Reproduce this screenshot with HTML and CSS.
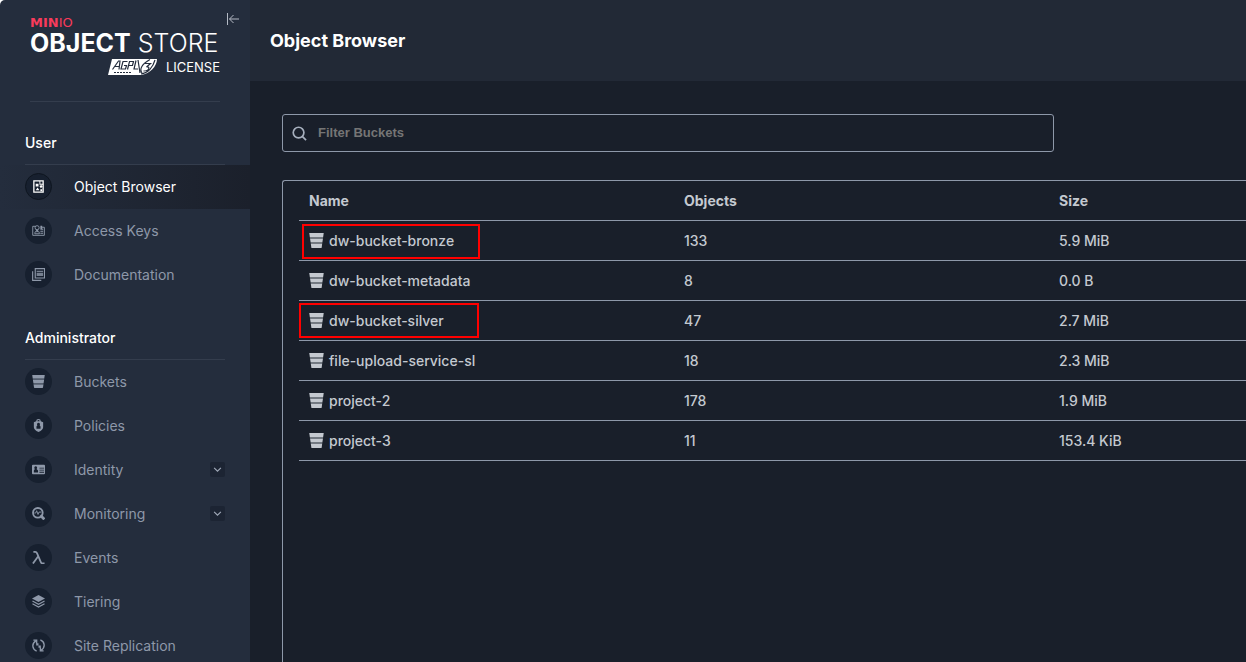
FILE: index.html
```html
<!DOCTYPE html>
<html lang="en">
<head>
<meta charset="utf-8">
<title>Object Browser</title>
<link rel="stylesheet" href="styles.css">
</head>
<body>
<svg class="defs" aria-hidden="true">
  <symbol id="bucket" viewBox="1 1 14 14.5">
    <path d="M1 1h14l-.6 4H1.600z"/><path d="M1.600 5h12.800l-.2 1.500H1.800z" opacity=".5"/>
    <path d="M1.800 6.500h12.400l-.5 3.500H2.300z"/><path d="M2.300 10h11.400l-.2 1.500h-11z" opacity=".5"/>
    <path d="M2.500 11.500h11L13 15q-.1.500-.6.500H3.600Q3.100 15.500 3 15z"/>
  </symbol>
</svg>
<div class="app">
  <aside class="sidebar">
    <header class="brand">
      <div class="logo">
        <div class="logo-small"><b>MIN</b>IO</div>
        <div class="logo-name"><b>OBJECT</b> STORE</div>
        <div class="logo-license">
          <svg class="agpl" viewBox="0 0 50 18" role="img" aria-label="AGPL v3 Free Software">
            <path d="M4 1h45c0 7-7 15-16 16H0z" fill="#fff"/>
            <g fill="none" stroke="#242d3d" stroke-width="1.200">
              <path d="M4.500 11.500l6-8.500h1.500l-1 8.500M7 8.500h4.500M19.500 3.500h-4.500l-2 7.500h4.500l1-3.500h-2.500M19.500 11.500l2-8h4l-1 4h-4M28 2.500l-2 8.500h4"/>
              <path d="M30 2l2 13M34 15c-3-4 0-9 8-13.500M33 16c7-1 12-7 14-14M37 5.500h5.500l-4 3.500c4-1 3 4-3 4" />
              <path d="M6 14.500h17" stroke-dasharray="2 1" stroke-width="1"/>
            </g>
          </svg>
          <span>LICENSE</span>
        </div>
      </div>
      <button class="collapse" type="button" aria-label="Collapse menu">
        <svg viewBox="0 0 14 14"><path d="M1.500 1v12M13 7H3.500M7.500 3l-4 4 4 4"/></svg>
      </button>
    </header>
    <nav>
      <h2>User</h2>
      <ul>
        <li><a class="item active" href="#browser"><span class="disc"><svg viewBox="0 0 14 14"><path d="M2 1h10v12H2z" fill="none" stroke="currentColor" stroke-width="1.400"/><path d="M4 4h3v3H4zM8 1h1v3h3v1H8zM8 6.500l2-1 1.500 1.500L9.500 9zM4 11l2-3 2 3zM9 10h2v2H9z"/></svg></span><span>Object Browser</span></a></li>
        <li><a class="item" href="#keys"><span class="disc"><svg viewBox="0 0 14 14"><g fill="none" stroke="currentColor"><path d="M4 2.500H.8v9.700h12.500V3.500H10"/><circle cx="5.500" cy="4" r="2.200"/><path d="M3 10.500c0-4.500 5-4.500 5 0zM4.500 6l2 3M6.500 6l-2 3"/></g><path d="M9 5h3v1.200H9zM9 7.200h3v1.200H9zM9 9.400h3v1.200H9zM9 2h2v3H9z"/></svg></span><span>Access Keys</span></a></li>
        <li><a class="item" href="#docs"><span class="disc"><svg viewBox="0 0 14 14"><path d="M3.500 .7h10v10h-10zM.7 3.500v9.800H10" fill="none" stroke="currentColor" stroke-width="1.200"/><path d="M5 3h7v1.200H5zM5 5h7v3.500H5z" opacity=".8"/></svg></span><span>Documentation</span></a></li>
      </ul>
      <h2>Administrator</h2>
      <ul>
        <li><a class="item" href="#buckets"><span class="disc"><svg><use href="#bucket"/></svg></span><span>Buckets</span></a></li>
        <li><a class="item" href="#policies"><span class="disc"><svg viewBox="0 0 14 14"><path fill-rule="evenodd" d="M4.500 2.500Q4.500 0 7 0t2.500 2.500L12 3.500V9q0 3-5 5Q2 12 2 9V3.500zM5.800 2.300h2.400Q8.200 1.200 7 1.200T5.800 2.300zM7 4a1.700 1.700 0 0 0-1.200 2.800L4.800 8v2.500h4.400V8L8.200 6.800A1.700 1.700 0 0 0 7 4z"/></svg></span><span>Policies</span></a></li>
        <li><a class="item" href="#identity"><span class="disc"><svg viewBox="0 0 14 14"><path fill-rule="evenodd" d="M1 2h12q1 0 1 1v8q0 1-1 1H1q-1 0-1-1V3q0-1 1-1zM4 3.500a1.700 1.700 0 0 0-.9 3L2 8v2.300h4.500V8L4.900 6.500A1.700 1.700 0 0 0 4 3.500zM8 5v1h5V5zM8 7.300v.9h5v-.9zM8 9.500v.9h5v-.9z"/></svg></span><span>Identity</span><span class="toggle"><svg viewBox="0 0 8 8"><path d="M1 2.500l3 3 3-3"/></svg></span></a></li>
        <li><a class="item" href="#monitoring"><span class="disc"><svg viewBox="0 0 14 14"><g fill="none" stroke="currentColor"><circle cx="6.300" cy="6.300" r="5.200" stroke-width="2"/><path d="M9 9l4.300 4.300" stroke-width="3"/><path d="M2.500 6.500H4l1-2.500 1.500 4 1-2.500h2.500"/></g></svg></span><span>Monitoring</span><span class="toggle"><svg viewBox="0 0 8 8"><path d="M1 2.500l3 3 3-3"/></svg></span></a></li>
        <li><a class="item" href="#events"><span class="disc"><svg viewBox="0 0 14 14"><path d="M1.500 1h2q1.400 0 2 1.500L9.500 12q.5 1.200 1.500 1.200h2.500M6.500 6L1 13.500" fill="none" stroke="currentColor" stroke-width="1.900"/></svg></span><span>Events</span></a></li>
        <li><a class="item" href="#tiering"><span class="disc"><svg viewBox="0 0 14 14"><path d="M7 0l7 3.700-7 3.800-7-3.800z"/><path d="M.5 6.500L7 10l6.500-3.500M.5 9.500L7 13l6.500-3.500" fill="none" stroke="currentColor" stroke-width="1.300"/></svg></span><span>Tiering</span></a></li>
        <li><a class="item" href="#replication"><span class="disc"><svg viewBox="0 0 14 14"><g fill="none" stroke="currentColor" stroke-width="1.500"><path d="M5 13C0 11-.5 5 4 2M1.500 1.200H5V5M9 1c5 2 5.500 8 1 11M12.500 12.800H9V9"/></g><path d="M4.500 4.500H7V7h2.500v2.500H7V7H4.500z"/></svg></span><span>Site Replication</span></a></li>
      </ul>
    </nav>
  </aside>
  <main>
    <header class="topbar"><h1>Object Browser</h1></header>
    <div class="content">
      <label class="search">
        <svg viewBox="0 0 16 16" aria-hidden="true"><circle cx="7" cy="7" r="5.700"/><path d="M11 11l4 4"/></svg>
        <input type="text" placeholder="Filter Buckets" aria-label="Filter Buckets">
      </label>
      <section class="panel">
        <table>
          <colgroup><col class="wide"><col class="wide"><col></colgroup>
          <thead><tr><th>Name</th><th>Objects</th><th>Size</th></tr></thead>
          <tbody>
            <tr><td><span class="bucket marked"><svg><use href="#bucket"/></svg>dw-bucket-bronze</span></td><td>133</td><td>5.9 MiB</td></tr>
            <tr><td><span class="bucket"><svg><use href="#bucket"/></svg>dw-bucket-metadata</span></td><td>8</td><td>0.0 B</td></tr>
            <tr><td><span class="bucket marked outer"><svg><use href="#bucket"/></svg>dw-bucket-silver</span></td><td>47</td><td>2.7 MiB</td></tr>
            <tr><td><span class="bucket"><svg><use href="#bucket"/></svg>file-upload-service-sl</span></td><td>18</td><td>2.3 MiB</td></tr>
            <tr><td><span class="bucket"><svg><use href="#bucket"/></svg>project-2</span></td><td>178</td><td>1.9 MiB</td></tr>
            <tr><td><span class="bucket"><svg><use href="#bucket"/></svg>project-3</span></td><td>11</td><td>153.4 KiB</td></tr>
          </tbody>
        </table>
      </section>
    </div>
  </main>
</div>
</body>
</html>
```
FILE: styles.css
```css
*, *::after { box-sizing: border-box; }
body {
  margin: 0;
  background: #191f2a;
  color: #c4c9d0;
  font: 14px/20px Inter, "Liberation Sans", sans-serif;
}
.defs { position: absolute; width: 0; height: 0; }
.app { display: flex; height: 100vh; overflow: hidden; }

.sidebar {
  flex: 0 0 250px;
  overflow: hidden;
  background: #242d3d;
  border-top-left-radius: 5px;
  box-shadow: 0 -8px 0 #fff;
}
.brand {
  display: flex;
  height: 102px;
  margin: 0 30px;
  padding-top: 17px;
  border-bottom: 1px solid #343d4d;
}
.logo { flex: none; width: 190px; color: #fff; white-space: nowrap; }
.logo-small { color: #f83b5b; font: 13px/12px "DejaVu Sans", sans-serif; }
.logo-name { font-size: 25px; font-weight: 300; line-height: 29px; }
.logo b { font-weight: 700; }
.logo-license {
  display: flex;
  justify-content: flex-end;
  align-items: center;
  gap: 8px;
  font-size: 13px;
  line-height: 18px;
}
.agpl { width: 50px; height: 18px; }
.collapse {
  flex: none;
  width: 14px;
  height: 14px;
  margin: -5px 0 0 6px;
  padding: 0;
  border: 0;
  background: none;
}
.collapse svg { display: block; fill: none; stroke: #b4bac5; }

nav h2 {
  height: 44px;
  margin: 19px 25px 0;
  padding-top: 12px;
  border-bottom: 1px solid #343d4d;
  color: #fff;
  font-size: 14px;
  font-weight: 500;
}
nav ul { margin: 0; padding: 0; list-style: none; }
.item {
  display: flex;
  align-items: center;
  height: 44px;
  padding: 0 25px;
  color: #8e98a9;
  text-decoration: none;
}
.active {
  background: linear-gradient(90deg, #242d3d, #1b202b);
  color: #fff;
}
.disc {
  display: grid;
  place-items: center;
  width: 27px;
  height: 27px;
  margin: 0 22px 1px 0;
  border-radius: 50%;
  background: #17202f;
}
.active .disc { border: 1px solid #0e151f; }
.disc svg { width: 13px; height: 13px; fill: currentColor; }
.toggle {
  display: grid;
  place-items: center;
  width: 15px;
  height: 15px;
  margin: 0 0 1px auto;
  border-radius: 2px;
  background: #1c2433;
}
.toggle svg { width: 9px; height: 9px; fill: none; stroke: #a0a9b8; }

main { flex: 1; min-width: 0; display: flex; flex-direction: column; }
.topbar { flex: none; height: 81px; padding: 28px 20px; background: #222936; }
h1 { margin: 0; color: #fff; font-size: 18px; line-height: 26px; font-weight: 700; }
.content { flex: 1; display: flex; flex-direction: column; padding: 33px 0 0 32px; }
.search {
  display: flex;
  align-items: center;
  gap: 11px;
  height: 38px;
  margin-right: 192px;
  padding-left: 9px;
  border: 1px solid #8e98a9;
  border-radius: 3px;
}
.search svg { width: 15px; height: 15px; fill: none; stroke: #a6afbd; stroke-width: 1.8; }
.search input {
  flex: 1;
  padding: 0;
  border: 0;
  outline: 0;
  background: none;
  color: #c4c9d0;
  font: 600 13px/20px "Liberation Sans", sans-serif;
}
.search input::placeholder { color: #757575; opacity: 1; }

.panel {
  flex: 1;
  margin-top: 28px;
  padding-left: 16px;
  border: 1px solid #8e98a9;
  border-width: 1px 0 0 1px;
  border-top-left-radius: 3px;
}
table { width: 100%; table-layout: fixed; border-spacing: 0; }
.wide { width: 375px; }
th, td {
  height: 40px;
  padding: 0 10px;
  border-bottom: 1px solid #8e98a9;
  text-align: left;
  font-weight: 500;
}
th { font-weight: 700; }
.bucket { position: relative; display: flex; align-items: center; gap: 5px; }
.bucket svg { width: 15px; height: 15px; margin-bottom: 1px; fill: currentColor; }
.marked::after {
  content: "";
  position: absolute;
  top: -7px;
  left: -7px;
  width: 178px;
  height: 35px;
  border: 2px solid #f00;
}
.outer::after { top: -8px; left: -10px; width: 180px; }
```
